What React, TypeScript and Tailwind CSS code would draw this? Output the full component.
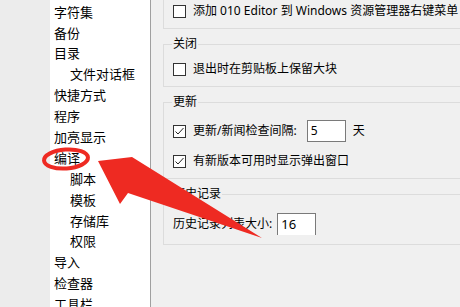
const cjk = { fontFamily: '"Noto Sans", "Noto Sans CJK SC", sans-serif' };

type Item = { label: string; indent?: boolean };

const tree: Item[] = [
  { label: "字符集" },
  { label: "备份" },
  { label: "目录" },
  { label: "文件对话框", indent: true },
  { label: "快捷方式" },
  { label: "程序" },
  { label: "加亮显示" },
  { label: "编译" },
  { label: "脚本", indent: true },
  { label: "模板", indent: true },
  { label: "存储库", indent: true },
  { label: "权限", indent: true },
  { label: "导入" },
  { label: "检查器" },
  { label: "工具栏" },
];

function Check({ checked }: { checked?: boolean }) {
  return (
    <span className="flex h-[13px] w-[13px] shrink-0 items-center justify-center border border-[#333333] bg-white">
      {checked && (
        <svg width="11" height="11" viewBox="0 0 11 11">
          <polyline points="1.5,5.5 4,8 9.5,2" fill="none" stroke="#222" strokeWidth="1" />
        </svg>
      )}
    </span>
  );
}

function Row({ checked, children }: { checked?: boolean; children: React.ReactNode }) {
  return (
    <div className="flex h-[16px] items-center gap-[7px]">
      <Check checked={checked} />
      <span className="whitespace-nowrap">{children}</span>
    </div>
  );
}

function Group({ title, children, className }: { title: string; children: React.ReactNode; className?: string }) {
  return (
    <fieldset className={`border border-r-0 border-[#dcdcdc] px-[9px] ${className ?? ""}`}>
      <legend className="ml-[-1px] px-[1px] leading-[16px]">{title}</legend>
      {children}
    </fieldset>
  );
}

export default function App() {
  return (
    <div className="relative flex h-[307px] w-[460px] overflow-hidden bg-[#f0f0f0] text-black" style={cjk}>
      <div className="w-[50px] shrink-0 bg-[#ececec]" />
      <div className="w-[101px] shrink-0 border-r border-[#a0a0a0] bg-white pt-[2px] pl-[4px] text-[13px]">
        {tree.map((t) => (
          <div key={t.label} className={`flex h-[20.9px] items-center whitespace-nowrap ${t.indent ? "pl-[16px]" : ""}`}>
            {t.label}
          </div>
        ))}
      </div>
      <div className="min-w-0 flex-1 pl-[12px] text-[12px]">
        <div className="flex h-[29px] items-start border-b border-l border-[#dcdcdc] pt-[3px] pl-[9px]">
          <Row>添加 010 Editor 到 Windows 资源管理器右键菜单</Row>
        </div>
        <Group title="关闭" className="mt-[7px] pt-[9px] pb-[9px]">
          <Row>退出时在剪贴板上保留大块</Row>
        </Group>
        <Group title="更新" className="mt-[7px] pt-[10px] pb-[9px]">
          <div className="flex h-[22px] items-center">
            <Check checked />
            <span className="ml-[7px] whitespace-nowrap">更新/新闻检查间隔:</span>
            <span className="ml-[10px] flex h-[22px] w-[39px] items-center border border-[#7a7a7a] bg-white pl-[3px]">5</span>
            <span className="ml-[7px]">天</span>
          </div>
          <div className="mt-[11px]">
            <Row checked>有新版本可用时显示弹出窗口</Row>
          </div>
        </Group>
        <Group title="历史记录" className="mt-[7px] pt-[11px] pb-[9px]">
          <div className="flex h-[22px] items-center">
            <span className="whitespace-nowrap">历史记录列表大小:</span>
            <span className="ml-[5px] flex h-[22px] w-[39px] items-center border border-b-0 border-[#7a7a7a] bg-white pl-[3px] text-[13px]">16</span>
          </div>
        </Group>
      </div>
      <svg className="pointer-events-none absolute inset-0" width="460" height="307" viewBox="0 0 460 307">
        <ellipse cx="66" cy="159" rx="22" ry="9.5" fill="none" stroke="#ee2a22" strokeWidth="4" transform="rotate(-4 66 159)" />
        <polygon points="98,161 132,157 262,238 128,193 120,204" fill="#ee2a22" />
      </svg>
    </div>
  );
}
